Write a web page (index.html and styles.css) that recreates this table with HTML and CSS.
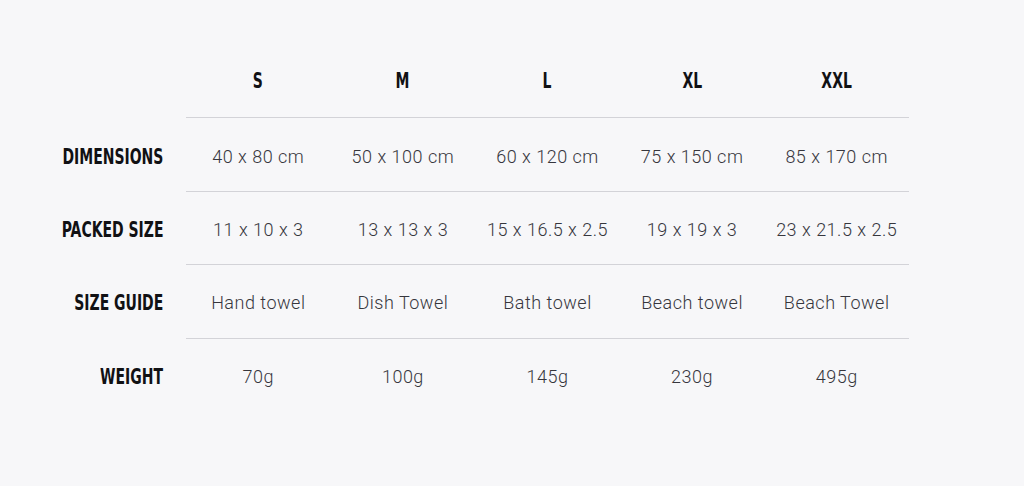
FILE: index.html
```html
<!DOCTYPE html>
<html lang="en">
<head>
<meta charset="utf-8">
<title>Size chart</title>
<link rel="stylesheet" href="styles.css">
</head>
<body>
<div class="chart">
  <div class="row head">
    <div class="label"></div>
    <div class="cells">
      <div class="cell"><span class="cond">S</span></div>
      <div class="cell"><span class="cond">M</span></div>
      <div class="cell"><span class="cond">L</span></div>
      <div class="cell"><span class="cond">XL</span></div>
      <div class="cell"><span class="cond">XXL</span></div>
    </div>
  </div>
  <div class="row">
    <div class="label"><span class="cond">DIMENSIONS</span></div>
    <div class="cells">
      <div class="cell">40 x 80 cm</div>
      <div class="cell">50 x 100 cm</div>
      <div class="cell">60 x 120 cm</div>
      <div class="cell">75 x 150 cm</div>
      <div class="cell">85 x 170 cm</div>
    </div>
  </div>
  <div class="row">
    <div class="label"><span class="cond">PACKED SIZE</span></div>
    <div class="cells">
      <div class="cell">11 x 10 x 3</div>
      <div class="cell">13 x 13 x 3</div>
      <div class="cell">15 x 16.5 x 2.5</div>
      <div class="cell">19 x 19 x 3</div>
      <div class="cell">23 x 21.5 x 2.5</div>
    </div>
  </div>
  <div class="row">
    <div class="label"><span class="cond">SIZE GUIDE</span></div>
    <div class="cells">
      <div class="cell">Hand towel</div>
      <div class="cell">Dish Towel</div>
      <div class="cell">Bath towel</div>
      <div class="cell">Beach towel</div>
      <div class="cell">Beach Towel</div>
    </div>
  </div>
  <div class="row last">
    <div class="label"><span class="cond">WEIGHT</span></div>
    <div class="cells">
      <div class="cell">70g</div>
      <div class="cell">100g</div>
      <div class="cell">145g</div>
      <div class="cell">230g</div>
      <div class="cell">495g</div>
    </div>
  </div>
</div>
</body>
</html>
```

FILE: styles.css
```css
html, body {
  margin: 0;
  padding: 0;
  background: #f7f7f9;
}

body {
  height: 486px;
  font-family: Roboto, "Liberation Sans", sans-serif;
  color: #36363d;
}

.chart {
  padding-top: 45px;
  display: flex;
  flex-direction: column;
}

.row {
  display: flex;
  align-items: stretch;
  height: 73.4px;
}

.label {
  flex: none;
  display: flex;
  align-items: center;
  justify-content: flex-end;
  padding-right: 23px;
  padding-top: 3px;
  box-sizing: border-box;
  width: 186px;
}

.cond {
  display: inline-block;
  font-family: "DejaVu Sans Condensed", "DejaVu Sans", sans-serif;
  font-weight: 700;
  font-size: 21px;
  letter-spacing: 0;
  color: #111114;
  transform: scaleX(0.74);
  white-space: nowrap;
}

.label .cond {
  transform-origin: right center;
}

.head .cond {
  transform-origin: center center;
}

.cells {
  display: flex;
  width: 723px;
  border-bottom: 1px solid #d3d3d8;
  box-sizing: border-box;
}

.last .cells {
  border-bottom: none;
}

.cell {
  flex: 1 1 0;
  display: flex;
  align-items: center;
  justify-content: center;
  padding-top: 3px;
  font-size: 18px;
  font-weight: 300;
  letter-spacing: 0.5px;
  white-space: nowrap;
}

.head .cell {
  padding-top: 0;
}
```
